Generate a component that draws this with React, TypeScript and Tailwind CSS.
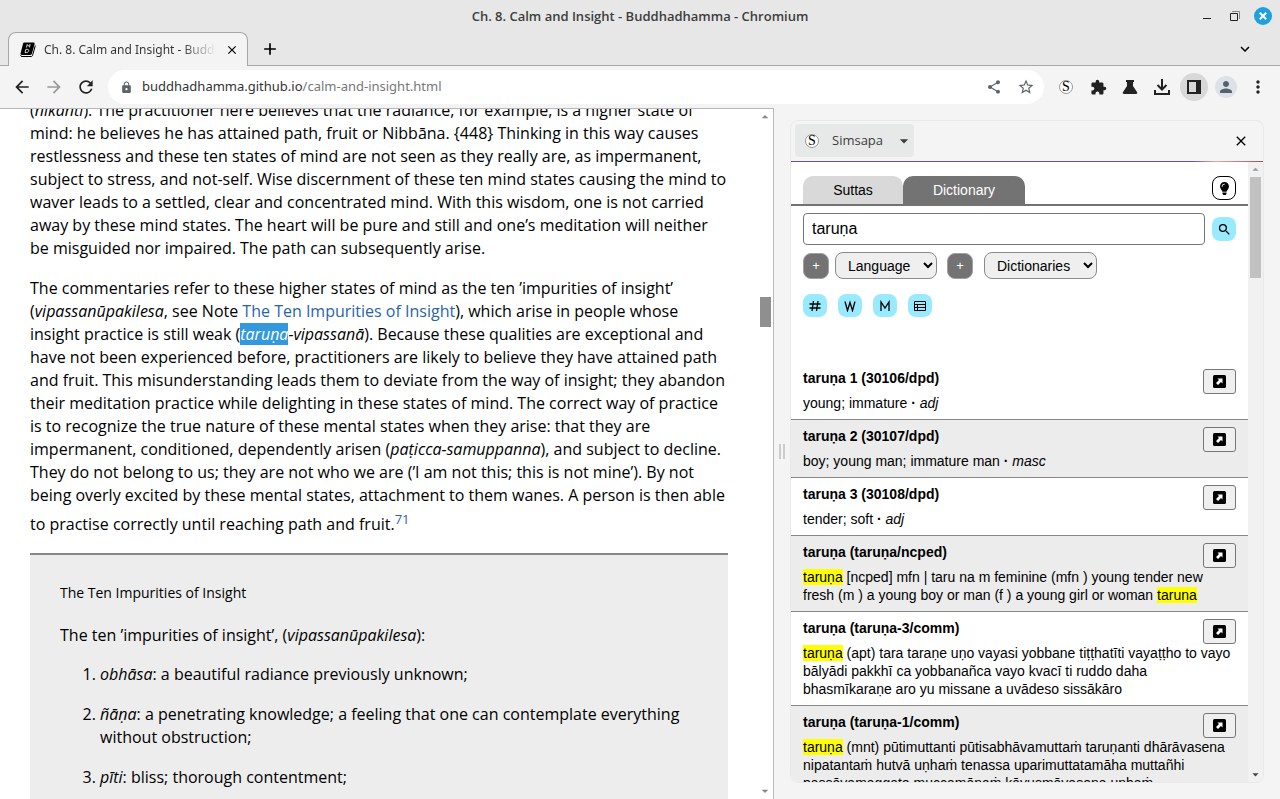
import React from "react";
import {
  MdArrowBack, MdArrowForward, MdRefresh, MdLock, MdShare, MdStarBorder, MdExtension,
  MdPerson, MdMoreVert, MdClose, MdAdd, MdSearch, MdArrowDropDown, MdArrowDropUp, MdKeyboardArrowDown,
} from "react-icons/md";
import { FaLightbulb } from "react-icons/fa";

function SimsapaMark() {
  return (
    <span className="flex size-[14px] shrink-0 items-center justify-center rounded-full border border-[#999] bg-white font-['Liberation_Serif',serif] text-sm leading-[14px] font-normal text-black">
      S
    </span>
  );
}

function BookIcon() {
  return (
    <svg viewBox="0 0 16 16" className="size-4 shrink-0" aria-hidden="true">
      <path d="M15.300 3.500 12.700 13c-.2.900-.8 1.500-1.700 1.500H2c-.8 0-1.400-.4-1.400-1.200" fill="none" stroke="#000" />
      <path d="M4.500.5h9c.9 0 1.300.6 1.100 1.400l-2.700 9.900c-.2.700-.7 1.100-1.400 1.100H1.800c-1 0-1.500-.7-1.200-1.600L3 1.700C3.200.9 3.700.5 4.500.5Z" fill="#000" />
      <path d="m6.500 5.500.7-3 1.100 1.600 1.900-1.600-.8 3M5.800 7.300h1.700c2 0 1.400 3.200-.7 3.200H5z" fill="none" stroke="#e8e8e8" strokeWidth=".9" />
    </svg>
  );
}

function FlaskIcon() {
  return (
    <svg viewBox="0 0 16 16" className="size-4" aria-hidden="true">
      <path d="M4 1h8v2h-1v4l4 6c.7 1.100.1 2-1.200 2H2.200C.9 15 .3 14.100 1 13l4-6V3H4z" fill="currentColor" />
    </svg>
  );
}

function DownloadIcon() {
  return (
    <svg viewBox="0 0 16 16" className="size-4" fill="none" stroke="currentColor" strokeWidth="2" aria-hidden="true">
      <path d="M8 0v10M3.500 6 8 10.500 12.500 6M1 11v4h14v-4" />
    </svg>
  );
}

function PanelIcon() {
  return (
    <svg viewBox="0 0 14 14" className="size-[14px]" aria-hidden="true">
      <path d="M1 1h12v12H1z" fill="none" stroke="currentColor" strokeWidth="2" />
      <path d="M9 1h4v12H9z" fill="currentColor" />
    </svg>
  );
}

function OpenIcon() {
  return (
    <svg viewBox="0 0 13 13" className="size-[13px]" aria-hidden="true">
      <rect width="13" height="13" rx="1.500" fill="#000" />
      <path d="M4.500 3.500h5v5L8 7l-3 3-2-2 3-3z" fill="#fff" />
    </svg>
  );
}

const chip = "flex w-6 items-center justify-center rounded-lg bg-[#99e9ff] text-black";

const toggles = [
  { label: "Numbers", width: 1.3, d: "M0.500 4h11M0.500 8h11M4.500 1 3 11M9 1 7.500 11" },
  { label: "Words", width: 1.3, d: "M1 1.500 3.500 10.500 6 2.500 8.500 10.500 11 1.500" },
  { label: "Meanings", width: 1.3, d: "M2 11V2L6 8 10 2V11" },
  { label: "Table", width: 1, d: "M.5 1.500h11v9H.5zM.5 4.500h11M.5 7.500h11M3.500 4.500v6" },
];

type Entry = { title: string; body: React.ReactNode };

function Mark({ children }: { children: React.ReactNode }) {
  return <mark className="bg-[#ffff00] text-black">{children}</mark>;
}

const entries: Entry[] = [
  { title: "taruṇa 1 (30106/dpd)", body: <>young; immature <b>·</b> <i>adj</i></> },
  { title: "taruṇa 2 (30107/dpd)", body: <>boy; young man; immature man <b>·</b> <i>masc</i></> },
  { title: "taruṇa 3 (30108/dpd)", body: <>tender; soft <b>·</b> <i>adj</i></> },
  {
    title: "taruṇa (taruṇa/ncped)",
    body: <><Mark>taruṇa</Mark> [ncped] mfn | taru na m feminine (mfn ) young tender new fresh (m ) a young boy or man (f ) a young girl or woman <Mark>taruna</Mark></>,
  },
  {
    title: "taruṇa (taruṇa-3/comm)",
    body: <><Mark>taruṇa</Mark> (apt) tara taraṇe uṇo vayasi yobbane tiṭṭhatīti vayaṭṭho to vayo bālyādi pakkhī ca yobbanañca vayo kvacī ti ruddo daha bhasmīkaraṇe aro yu missane a uvādeso sissākāro</>,
  },
  {
    title: "taruṇa (taruṇa-1/comm)",
    body: <><Mark>taruṇa</Mark> (mnt) pūtimuttanti pūtisabhāvamuttaṁ taruṇanti dhārāvasena nipatantaṁ hutvā uṇhaṁ tenassa uparimuttatamāha muttañhi passāvamaggato muccamānaṁ kāyusmāvasena uṇhaṁ</>,
  },
];

function WindowHeader() {
  return (
    <header className="shrink-0 bg-[#e7e7e7]">
      <div className="grid h-8 grid-cols-[1fr_auto_1fr] items-center pr-2">
        <span />
        <h1 className="pt-px pl-2 text-[13px] font-semibold text-[#3d3d3d]">Ch. 8. Calm and Insight - Buddhadhamma - Chromium</h1>
        <div className="flex items-center justify-end gap-3 text-[#222]">
          <button aria-label="Minimize" className="flex size-4 items-center justify-center">
            <svg viewBox="0 0 16 16" className="size-4" aria-hidden="true"><path d="M5 10.500h8" stroke="currentColor" /></svg>
          </button>
          <button aria-label="Restore" className="flex size-4 items-center justify-center">
            <svg viewBox="0 0 16 16" className="size-4" fill="none" aria-hidden="true">
              <path d="M4.500 5.500h7v7h-7z" stroke="currentColor" /><path d="M6 3.500h7.500V11" stroke="#888" />
            </svg>
          </button>
          <button aria-label="Close window" className="flex size-[18px] items-center justify-center rounded-full bg-[#209fe0] text-white">
            <svg viewBox="0 0 8 8" className="size-2" aria-hidden="true"><path d="m.8.800 6.400 6.400m0-6.400L.8 7.200" stroke="currentColor" strokeWidth="2" /></svg>
          </button>
        </div>
      </div>
      <div className="flex h-[34px] items-end border-b border-[#a8a8a8]">
        <div className="-mb-px ml-2 flex h-[34px] w-60 items-center rounded-t-lg border border-b-0 border-[#a8a8a8] bg-[#f4f4f4] pr-[7px] pl-[11px]">
          <BookIcon />
          <span className="ml-2 flex-1 overflow-hidden bg-linear-to-r from-[#333] from-80% to-transparent bg-clip-text font-['Noto_Sans',sans-serif] text-xs leading-5 whitespace-nowrap text-transparent">
            Ch. 8. Calm and Insight - Buddhadhamma
          </span>
          <button aria-label="Close tab" className="ml-2 flex size-4 items-center justify-center"><MdClose size={14} /></button>
        </div>
        <button aria-label="New tab" className="ml-3 flex h-8 items-center"><MdAdd size={20} /></button>
        <button aria-label="Search tabs" className="mr-[26px] ml-auto flex h-8 items-center"><MdKeyboardArrowDown size={18} /></button>
      </div>
    </header>
  );
}

function Toolbar() {
  return (
    <nav className="flex h-[42px] shrink-0 items-center bg-[#f4f4f4] px-3 text-[#222]">
      <div className="flex gap-3">
        <button aria-label="Back"><MdArrowBack size={20} /></button>
        <button aria-label="Forward" className="text-[#999]"><MdArrowForward size={20} /></button>
        <button aria-label="Reload"><MdRefresh size={20} /></button>
      </div>
      <div className="ml-3 flex h-[34px] flex-1 items-center rounded-full bg-white pr-[9px] pl-3 text-[#5f6368]">
        <MdLock size={13} />
        <a href="#address" className="ml-[9px] flex-1 font-['Noto_Sans',sans-serif] text-[13px] text-[#777]"><span className="text-[#333]">buddhadhamma.github.io</span>/calm-and-insight.html</a>
        <button aria-label="Share" className="mr-[15px]"><MdShare size={16} /></button>
        <button aria-label="Bookmark"><MdStarBorder size={18} /></button>
      </div>
      <div className="ml-[14px] flex items-center">
        <button aria-label="Simsapa" className="flex w-8 items-center pl-px"><SimsapaMark /></button>
        <button aria-label="Extensions" className="flex w-8"><MdExtension size={17} /></button>
        <button aria-label="Labs" className="flex w-8"><FlaskIcon /></button>
        <button aria-label="Downloads" className="flex w-[26px]"><DownloadIcon /></button>
        <button aria-label="Side panel" className="mr-[7px] flex size-7 items-center justify-center rounded-full bg-[#d8d8d8]"><PanelIcon /></button>
        <button aria-label="Profile" className="mr-[11px] flex size-[22px] items-center justify-center rounded-full bg-[#dee1e6] text-[#566073]"><MdPerson size={18} /></button>
        <button aria-label="Menu"><MdMoreVert size={20} /></button>
      </div>
    </nav>
  );
}

function Article() {
  return (
    <div className="flex min-w-0 flex-1 overflow-hidden border-t border-r border-[#b8b8b8] bg-white">
      <main className="-mt-2.5 min-w-0 flex-1 pr-[29px] pl-[30px] text-base leading-[23px] text-black">
        <p>
          (<i>nikanti</i>). The practitioner here believes that the radiance, for example, is a higher state of mind: he believes he has attained path, fruit or Nibbāna. {"{448}"} Thinking in this way causes restlessness and these ten states of mind are not seen as they really are, as impermanent, subject to stress, and not-self. Wise discernment of these ten mind states causing the mind to waver leads to a settled, clear and concentrated mind. With this wisdom, one is not carried away by these mind states. The heart will be pure and still and one’s meditation will neither be misguided nor impaired. The path can subsequently arise.
        </p>
        <p className="mt-[17px]">
          The commentaries refer to these higher states of mind as the ten ’impurities of insight’ (<i>vipassanūpakilesa</i>, see Note <a href="#impurities" className="text-[#2a64a8]">The Ten Impurities of Insight</a>), which arise in people whose insight practice is still weak (<i><span className="bg-[#3399dd] text-white">taruṇa</span>-vipassanā</i>). Because these qualities are exceptional and have not been experienced before, practitioners are likely to believe they have attained path and fruit. This misunderstanding leads them to deviate from the way of insight; they abandon their meditation practice while delighting in these states of mind. The correct way of practice is to recognize the true nature of these mental states when they arise: that they are impermanent, conditioned, dependently arisen (<i>paṭicca-samuppanna</i>), and subject to decline. They do not belong to us; they are not who we are (’I am not this; this is not mine’). By not being overly excited by these mental states, attachment to them wanes. A person is then able to practise correctly until reaching path and fruit.<sup className="static align-super text-[13px] leading-6"><a href="#note-71" className="text-[#2a64a8]">71</a></sup>
        </p>
        <section id="impurities" className="mt-[17px] h-80 border-t-2 border-[#888] bg-[#ededed] px-[30px] pt-[26px]">
          <h2 className="text-sm leading-[23px]">The Ten Impurities of Insight</h2>
          <p className="mt-5">The ten ’impurities of insight’, (<i>vipassanūpakilesa</i>):</p>
          <ol className="mt-4 list-decimal space-y-[17px] pl-10">
            <li><i>obhāsa</i>: a beautiful radiance previously unknown;</li>
            <li><i>ñāṇa</i>: a penetrating knowledge; a feeling that one can contemplate everything without obstruction;</li>
            <li><i>pīti</i>: bliss; thorough contentment;</li>
          </ol>
        </section>
      </main>
      <div className="flex w-4 shrink-0 flex-col items-center text-[#888]">
        <MdArrowDropUp size={16} />
        <div className="mt-[172px] h-[30px] w-[11px] bg-[#8f8f8f]" />
        <MdArrowDropDown size={16} className="mt-auto" />
      </div>
    </div>
  );
}

function SidePanel() {
  return (
    <aside className="flex w-[506px] shrink-0 items-center bg-[#f4f4f4] pt-3 pr-4 pb-4">
      <div className="flex w-4 shrink-0 justify-center gap-[2px]">
        <span className="h-[15px] w-[2px] bg-[#ccc]" /><span className="h-[15px] w-[2px] bg-[#ccc]" />
      </div>
      <div className="flex h-full min-w-0 flex-1 flex-col overflow-hidden rounded-lg border border-[#e9e9e9]">
        <div className="flex h-10 shrink-0 items-center justify-between pr-[14px] pb-px pl-1">
          <button className="flex h-[33px] w-[119px] items-center rounded bg-[#e7e9e8] pl-[10px] text-[13px] text-[#3d3d3d]">
            <SimsapaMark />
            <span className="ml-[13px]">Simsapa</span>
            <MdArrowDropDown size={20} className="ml-auto" />
          </button>
          <button aria-label="Close side panel"><MdClose size={16} /></button>
        </div>
        <div className="h-px shrink-0 bg-linear-to-r from-[#6a5096] from-85% via-[#e0a8a0] via-90% to-[#a05068]" />
        <div className="flex min-h-0 flex-1 bg-white font-['Liberation_Sans',sans-serif] text-black">
          <div className="min-w-0 flex-1 overflow-hidden">
            <div className="flex h-11 items-end border-b-2 border-[#737373] px-3">
              <button className="h-7 w-[100px] rounded-t-[10px] bg-[#d9d9d9] text-sm">Suttas</button>
              <button className="h-7 w-[122px] rounded-t-[10px] bg-[#737373] text-sm text-white">Dictionary</button>
              <button aria-label="Hints" className="mb-1 ml-auto flex size-6 items-center justify-center rounded-lg border border-black bg-white"><FaLightbulb size={13} /></button>
            </div>
            <div className="flex items-center gap-[7px] px-3 pt-[7px]">
              <input aria-label="Search" defaultValue="taruṇa" className="h-8 min-w-0 flex-1 rounded border border-[#767676] bg-white px-2 text-base" />
              <button aria-label="Run search" className={chip + " h-6"}><MdSearch size={15} /></button>
            </div>
            <div className="flex items-center px-3 pt-[7px]">
              <button aria-label="Include language" className="size-[26px] rounded-lg border border-[#a0a0a0] bg-[#737373] text-[13px] text-white">+</button>
              <select aria-label="Language" className="ml-[6px] h-[27px] w-[102px] rounded-lg border border-[#8a8a8a] bg-[#efefef] pl-2 text-sm"><option>Language</option></select>
              <button aria-label="Include dictionary" className="ml-[10px] size-[26px] rounded-lg border border-[#a0a0a0] bg-[#737373] text-[13px] text-white">+</button>
              <select aria-label="Dictionaries" className="ml-[11px] h-[27px] w-[113px] rounded-lg border border-[#8a8a8a] bg-[#efefef] pl-2 text-sm"><option>Dictionaries</option></select>
            </div>
            <div className="flex gap-[11px] px-3 pt-[15px] pb-[45px]">
              {toggles.map((t) => (
                <button key={t.label} aria-label={t.label} className={chip + " h-[23px]"}>
                  <svg viewBox="0 0 12 12" className="size-3" fill="none" stroke="currentColor" strokeWidth={t.width} aria-hidden="true">
                    <path d={t.d} />
                  </svg>
                </button>
              ))}
            </div>
            <ul>
              {entries.map((e) => (
                <li key={e.title} className="border-b border-[#888] px-3 pt-[7px] pb-[7px] odd:bg-white even:bg-[#ececec]">
                  <div className="flex h-[25px] items-start justify-between">
                    <h3 className="text-sm leading-[18px] font-bold">{e.title}</h3>
                    <button aria-label={"Open " + e.title} className="flex h-[25px] w-[33px] items-center justify-center rounded-[3px] border border-[#767676] bg-[#efefef]"><OpenIcon /></button>
                  </div>
                  <p className="text-sm leading-[18px]">{e.body}</p>
                </li>
              ))}
            </ul>
          </div>
          <div className="flex w-[15px] shrink-0 flex-col items-center bg-[#f1f1f1]">
            <MdArrowDropUp size={15} className="text-[#999]" />
            <div className="h-[101px] w-[11px] bg-[#c1c1c1]" />
            <MdArrowDropDown size={15} className="mt-auto text-[#444]" />
          </div>
        </div>
      </div>
    </aside>
  );
}

export default function App() {
  return (
    <div className="flex h-screen flex-col overflow-hidden bg-[#f4f4f4] font-['Open_Sans','Noto_Sans',sans-serif]">
      <WindowHeader />
      <Toolbar />
      <div className="flex min-h-0 flex-1">
        <Article />
        <SidePanel />
      </div>
    </div>
  );
}
